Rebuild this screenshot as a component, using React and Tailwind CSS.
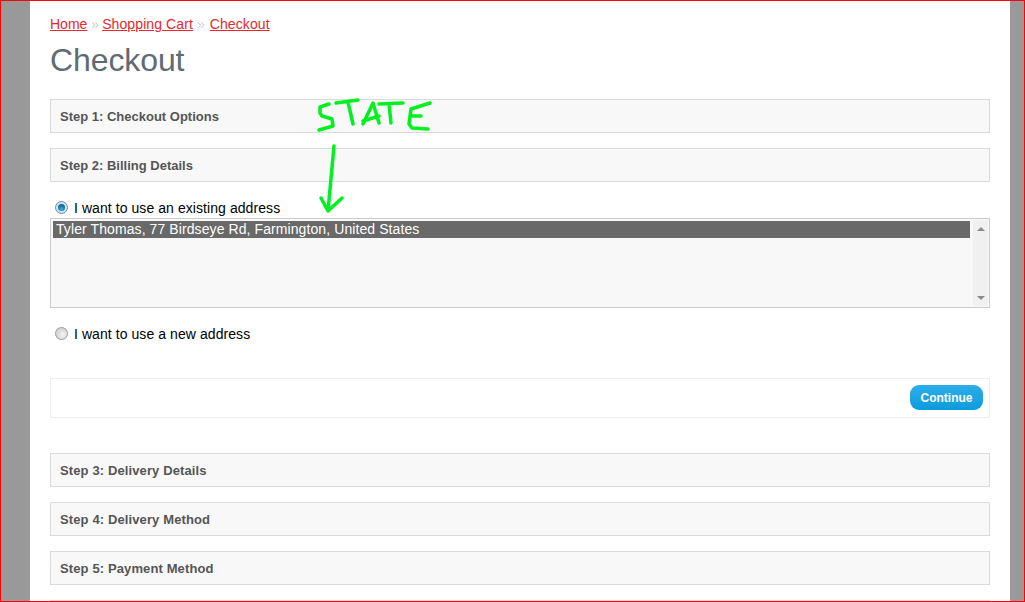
import React from 'react';

function StepHeader({ title, tight }) {
  return (
    <div className={tight ? "h-[34px] mb-[15px] flex items-center shrink-0 bg-[#f8f8f8] border border-[#dbdbdb] px-[9px] text-[13px] leading-none font-bold text-[#555555]" : "h-[34px] mb-[15px] flex items-center shrink-0 bg-[#f8f8f8] border border-[#dbdbdb] px-[9px] text-[13px] leading-none font-bold tracking-[0.12px] text-[#555555]"}>
      {title}
    </div>
  );
}

function Radio({ checked }) {
  if (checked) {
    return (
      <span className="mb-[2px] w-[13px] h-[13px] rounded-full border border-[#6f8fa5] bg-[#cfe3ee] flex items-center justify-center shrink-0">
        <span className="w-[7px] h-[7px] rounded-full bg-[radial-gradient(circle_at_50%_75%,#2fb0ee,#07466f)]"></span>
      </span>
    );
  }
  return <span className="mb-[2px] w-[13px] h-[13px] rounded-full border border-[#9a9a9a] bg-[radial-gradient(circle_at_60%_60%,#f4f4f4,#c4c4c4)] shrink-0"></span>;
}

function Annotation() {
  return (
    <svg className="absolute left-0 top-0 pointer-events-none" width="1025" height="602" fill="none" stroke="#00f020" strokeWidth="3.5" strokeLinecap="round" strokeLinejoin="round">
      <path d="M328 103 L319 106 L319 112 L321 115 L331 118 L332 125 L318 129" />
      <path d="M335 102 L357 99 M347 101 L352 123" />
      <path d="M362 123 L372 102 L378 122 M362 120 L378 115" />
      <path d="M378 103 L402 102 M388 103 L390 122" />
      <path d="M429 102 L410 108 L408 123 L411 127 L427 128 M410 115 L420 115" />
      <path d="M333 145 L327 210 M320 197 L327 210 L341 197" />
    </svg>
  );
}

export default function App() {
  return (
    <div className="relative w-[1025px] h-[602px] overflow-hidden border border-[#ff0000] bg-[#999999] font-['Liberation_Sans',Arial,sans-serif] flex justify-start">
      <div className="ml-[29px] w-[980px] h-full bg-white px-5 flex flex-col overflow-hidden">
        {/* breadcrumb */}
        <div className="mt-[15px] h-4 flex items-center text-[14px] leading-4 text-[#cfcfcf] shrink-0">
          <a href="#" className="text-[#e8282e] underline">Home</a>
          <span className="ml-[4px] mr-[3px]">»</span>
          <a href="#" className="text-[#e8282e] underline tracking-[0.1px]">Shopping Cart</a>
          <span className="ml-[4px] mr-[5px]">»</span>
          <a href="#" className="text-[#e8282e] underline tracking-[0.1px]">Checkout</a>
        </div>
        <h1 className="mt-[9px] mb-[20px] h-[38px] flex items-center text-[32px] leading-none font-normal tracking-[-0.1px] text-[#5f6b73] shrink-0">Checkout</h1>

        <StepHeader tight title="Step 1: Checkout Options" />
        <StepHeader tight title="Step 2: Billing Details" />

        {/* billing */}
        <div className="h-[271px] -mt-[15px] shrink-0 flex flex-col">
          <label className="mt-[18px] h-[16px] flex items-center gap-[6px] pl-[5px] text-[14px] leading-4 tracking-[0.07px] text-black">
            <Radio checked />
            I want to use an existing address
          </label>
          <div className="mt-[2px] h-[90px] flex border border-[#cccccc] bg-[#f8f8f8] shrink-0">
            <div className="flex-1 pt-[2px] px-[2px]">
              <div className="h-[17px] flex items-center pl-[3px] pb-[2px] bg-[#696969] text-[14px] leading-none tracking-[0.09px] text-white">
                Tyler Thomas, 77 Birdseye Rd, Farmington, United States
              </div>
            </div>
            <div className="w-[15px] m-px bg-[#f0f0f0] flex flex-col items-center justify-between pt-[7px] pb-[6px]">
              <span className="w-0 h-0 border-x-[4px] border-x-transparent border-b-[4px] border-b-[#8a8a8a]"></span>
              <span className="w-0 h-0 border-x-[4px] border-x-transparent border-t-[4px] border-t-[#8a8a8a]"></span>
            </div>
          </div>
          <label className="mt-[18px] h-[16px] flex items-center gap-[6px] pl-[5px] text-[14px] leading-4 tracking-[0.07px] text-black">
            <Radio />
            I want to use a new address
          </label>
          <div className="mt-[36px] h-[40px] flex justify-end pt-[6px] pr-[6px] border border-[#eeeeee] bg-white shrink-0">
            <button className="w-[73px] h-[25px] rounded-[9px] bg-gradient-to-b from-[#2badea] to-[#0a9cdc] text-[12px] font-bold text-white">Continue</button>
          </div>
        </div>

        <StepHeader title="Step 3: Delivery Details" />
        <StepHeader title="Step 4: Delivery Method" />
        <StepHeader title="Step 5: Payment Method" />
        <div className="h-[34px] shrink-0 bg-[#f8f8f8] border border-[#dbdbdb]"></div>
      </div>
      <Annotation />
    </div>
  );
}
